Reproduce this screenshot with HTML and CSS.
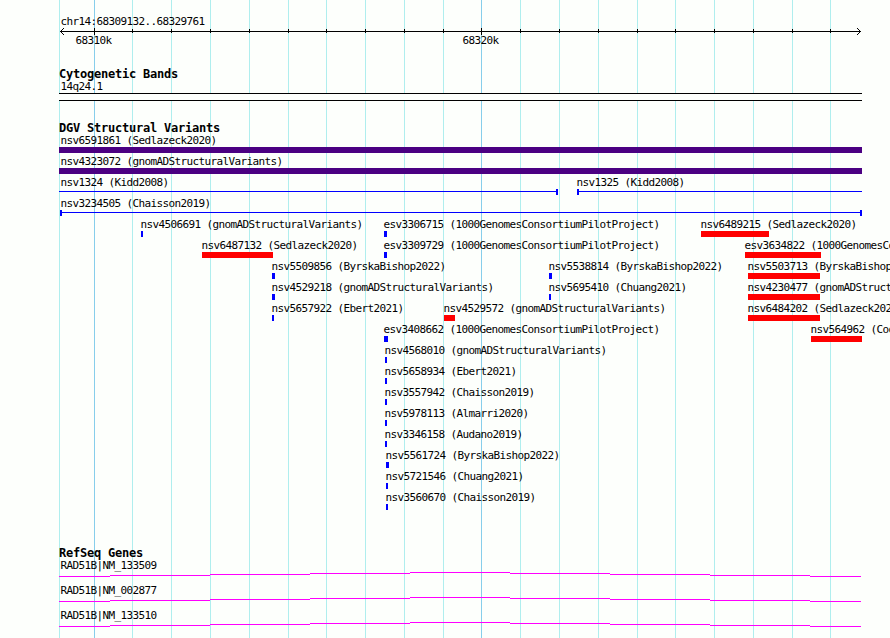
FILE: index.html
```
<!DOCTYPE html>
<html lang="en">
<head>
    <meta charset="UTF-8">
    <title>chr14:68309132..68329761</title>
    <link rel="stylesheet" href="styles.css">
</head>
<body>
    <!-- vertical grid -->
    <svg class="grid" width="890" height="638">
        <path class="minor" d="M59.5 0V638M132.5 0V638M171.5 0V638M210.5 0V638M249.5 0V638M288.5 0V638M326.5 0V638M365.5 0V638M404.5 0V638M443.5 0V638M520.5 0V638M559.5 0V638M598.5 0V638M637.5 0V638M675.5 0V638M714.5 0V638M753.5 0V638M792.5 0V638M830.5 0V638"/>
        <path class="major" d="M94.5 0V638M481.5 0V638"/>
    </svg>

    <main class="panel">
        <header class="ruler">
            <div class="region">chr14:68309132..68329761</div>
            <svg class="scale" width="890" height="8">
                <path d="M60 3.5H861M94.5 0V7M481.5 0V7M132.5 1V5M171.5 1V5M210.5 1V5M249.5 1V5M288.5 1V5M326.5 1V5M365.5 1V5M404.5 1V5M443.5 1V5M520.5 1V5M559.5 1V5M598.5 1V5M637.5 1V5M675.5 1V5M714.5 1V5M753.5 1V5M792.5 1V5M830.5 1V5"/>
                <path class="arrow" d="M63.5 .5L60.5 3.5L63.5 6.5M857.5 .5L860.5 3.5L857.5 6.5"/>
            </svg>
            <div class="numbers">
                <span>68310k</span>
                <span>68320k</span>
            </div>
        </header>

        <section class="track bands">
            <h2>Cytogenetic Bands</h2>
            <div class="band-name">14q24.1</div>
            <div class="band"></div>
        </section>

        <section class="track variants">
            <h2>DGV Structural Variants</h2>
            <div class="row">
                <div class="feature cut" style="--x:59px;--w:803px"><span>nsv6591861 (Sedlazeck2020)</span><i class="bar complex"></i></div>
            </div>
            <div class="row">
                <div class="feature cut" style="--x:59px;--w:803px"><span>nsv4323072 (gnomADStructuralVariants)</span><i class="bar complex"></i></div>
            </div>
            <div class="row">
                <div class="feature cut" style="--x:59px;--w:499px"><span>nsv1324 (Kidd2008)</span><i class="bar line end"></i></div>
                <div class="feature" style="--x:577px;--w:285px"><span>nsv1325 (Kidd2008)</span><i class="bar line start"></i></div>
            </div>
            <div class="row">
                <div class="feature whole" style="--x:60px;--w:802px"><span>nsv3234505 (Chaisson2019)</span><i class="bar line start end"></i></div>
            </div>
            <div class="row">
                <div class="feature" style="--x:141px;--w:2px"><span>nsv4506691 (gnomADStructuralVariants)</span><i class="bar gain"></i></div>
                <div class="feature" style="--x:384px;--w:3px"><span>esv3306715 (1000GenomesConsortiumPilotProject)</span><i class="bar gain"></i></div>
                <div class="feature" style="--x:701px;--w:68px"><span>nsv6489215 (Sedlazeck2020)</span><i class="bar loss"></i></div>
            </div>
            <div class="row">
                <div class="feature" style="--x:202px;--w:71px"><span>nsv6487132 (Sedlazeck2020)</span><i class="bar loss"></i></div>
                <div class="feature" style="--x:384px;--w:3px"><span>esv3309729 (1000GenomesConsortiumPilotProject)</span><i class="bar gain"></i></div>
                <div class="feature" style="--x:745px;--w:76px"><span>esv3634822 (1000GenomesConsortiumPhase3)</span><i class="bar loss"></i></div>
            </div>
            <div class="row">
                <div class="feature" style="--x:272px;--w:3px"><span>nsv5509856 (ByrskaBishop2022)</span><i class="bar gain"></i></div>
                <div class="feature" style="--x:549px;--w:3px"><span>nsv5538814 (ByrskaBishop2022)</span><i class="bar gain"></i></div>
                <div class="feature" style="--x:748px;--w:72px"><span>nsv5503713 (ByrskaBishop2022)</span><i class="bar loss"></i></div>
            </div>
            <div class="row">
                <div class="feature" style="--x:272px;--w:3px"><span>nsv4529218 (gnomADStructuralVariants)</span><i class="bar gain"></i></div>
                <div class="feature" style="--x:549px;--w:2px"><span>nsv5695410 (Chuang2021)</span><i class="bar gain"></i></div>
                <div class="feature" style="--x:748px;--w:72px"><span>nsv4230477 (gnomADStructuralVariants)</span><i class="bar loss"></i></div>
            </div>
            <div class="row">
                <div class="feature" style="--x:272px;--w:2px"><span>nsv5657922 (Ebert2021)</span><i class="bar gain"></i></div>
                <div class="feature" style="--x:444px;--w:11px"><span>nsv4529572 (gnomADStructuralVariants)</span><i class="bar loss"></i></div>
                <div class="feature" style="--x:748px;--w:72px"><span>nsv6484202 (Sedlazeck2020)</span><i class="bar loss"></i></div>
            </div>
            <div class="row">
                <div class="feature" style="--x:384px;--w:4px"><span>esv3408662 (1000GenomesConsortiumPilotProject)</span><i class="bar gain"></i></div>
                <div class="feature" style="--x:811px;--w:51px"><span>nsv564962 (Cooper2011)</span><i class="bar loss"></i></div>
            </div>
            <div class="row">
                <div class="feature" style="--x:385px;--w:2px"><span>nsv4568010 (gnomADStructuralVariants)</span><i class="bar gain"></i></div>
            </div>
            <div class="row">
                <div class="feature" style="--x:385px;--w:2px"><span>nsv5658934 (Ebert2021)</span><i class="bar gain"></i></div>
            </div>
            <div class="row">
                <div class="feature" style="--x:385px;--w:2px"><span>nsv3557942 (Chaisson2019)</span><i class="bar gain"></i></div>
            </div>
            <div class="row">
                <div class="feature" style="--x:385px;--w:2px"><span>nsv5978113 (Almarri2020)</span><i class="bar gain"></i></div>
            </div>
            <div class="row">
                <div class="feature" style="--x:385px;--w:2px"><span>nsv3346158 (Audano2019)</span><i class="bar gain"></i></div>
            </div>
            <div class="row">
                <div class="feature" style="--x:386px;--w:3px"><span>nsv5561724 (ByrskaBishop2022)</span><i class="bar gain"></i></div>
            </div>
            <div class="row">
                <div class="feature" style="--x:386px;--w:2px"><span>nsv5721546 (Chuang2021)</span><i class="bar gain"></i></div>
            </div>
            <div class="row">
                <div class="feature" style="--x:386px;--w:2px"><span>nsv3560670 (Chaisson2019)</span><i class="bar gain"></i></div>
            </div>
        </section>

        <section class="track genes">
            <h2>RefSeq Genes</h2>
            <div class="gene">
                <span>RAD51B|NM_133509</span>
                <svg width="890" height="5"><path d="M59 4.5H110M110 3.5H210M210 2.5H310M310 1.5H410M410 .5H510M510 1.5H610M610 2.5H710M710 3.5H810M810 4.5H861"/></svg>
            </div>
            <div class="gene">
                <span>RAD51B|NM_002877</span>
                <svg width="890" height="5"><path d="M59 4.5H110M110 3.5H210M210 2.5H310M310 1.5H410M410 .5H510M510 1.5H610M610 2.5H710M710 3.5H810M810 4.5H861"/></svg>
            </div>
            <div class="gene">
                <span>RAD51B|NM_133510</span>
                <svg width="890" height="5"><path d="M59 4.5H110M110 3.5H210M210 2.5H310M310 1.5H410M410 .5H510M510 1.5H610M610 2.5H710M710 3.5H810M810 4.5H861"/></svg>
            </div>
        </section>
    </main>
</body>
</html>
```
FILE: styles.css
```
*{box-sizing:border-box}
body{
    margin:0;
    width:890px;
    height:638px;
    overflow:hidden;
    background:#fdfffc;
    color:#000;
    font:11px/13px "DejaVu Sans Mono","Liberation Mono",monospace;
    letter-spacing:-.623px;
    white-space:nowrap;
}
svg{
    display:block;
    fill:none;
    shape-rendering:crispEdges;
}

/* grid lies under all the tracks */
.grid{
    position:absolute;
    top:0;
    left:0;
    z-index:-1;
}
.minor{stroke:#afeeee}
.major{stroke:#87ceeb}

.panel{
    height:638px;
    padding-top:15px;
    overflow:hidden;
}

/* ruler */
.ruler{height:53px}
.region{padding-left:60.4px}
.scale{stroke:#000}
.arrow{stroke-linecap:square}
.numbers{
    display:flex;
    padding-left:75.4px;
    margin-top:-2px;
}
.numbers span{width:387px}

/* tracks */
h2{
    margin:0;
    padding-left:59px;
    height:12px;
    font-size:12px;
    line-height:13px;
    font-weight:bold;
    letter-spacing:-.225px;
}
.bands{height:54px}
.band-name{
    height:13px;
    padding-left:60.4px;
}
.band{
    width:803px;
    height:8px;
    margin-left:59px;
    border-top:1px solid #000;
    border-bottom:1px solid #000;
    background:#fdfffc;
}

.variants{height:425px}
.row{
    display:grid;
    grid-template-columns:890px;
    height:21px;
}
.feature{
    grid-area:1/1;
    margin-left:var(--x);
}
.feature span{
    display:block;
    height:13px;
    margin-left:-.6px;
}
.feature.cut span{margin-left:1.4px}
.feature.whole span{margin-left:.4px}
.bar{
    display:block;
    width:var(--w);
    height:6px;
}
.complex{background:#4b0082}
.gain{background:#00f}
.loss{background:#f00}
.line{background:linear-gradient(#00f,#00f) 0 2px/100% 1px no-repeat}
.start{border-left:2px solid #00f}
.end{border-right:2px solid #00f}

.gene{height:25px}
.gene span{
    display:block;
    height:13px;
    padding-left:60.4px;
}
.gene svg{stroke:#f0f}
```
